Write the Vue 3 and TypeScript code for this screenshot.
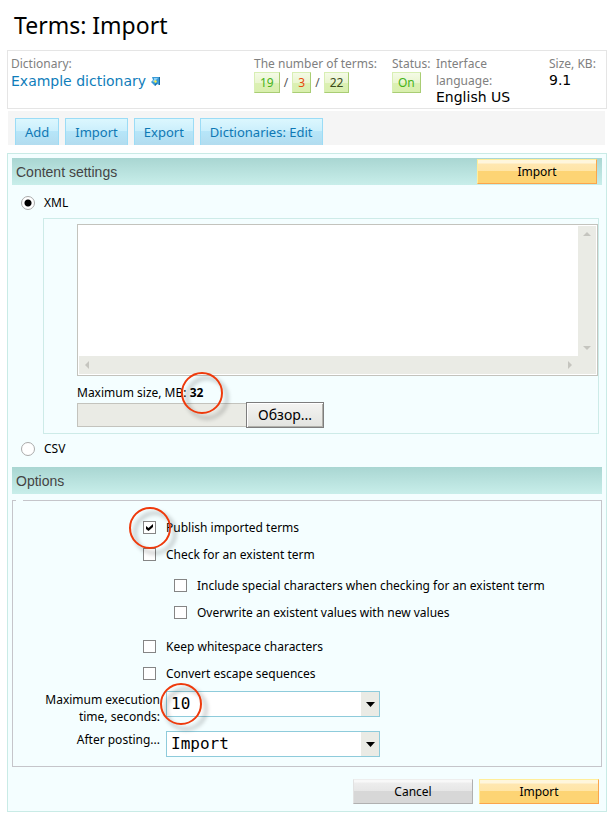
<script setup lang="ts">
import { ref } from 'vue'

interface Option {
  id: string
  label: string
  nested?: boolean
  marked?: boolean
  checked: boolean
}

const actions = ['Add', 'Import', 'Export', 'Dictionaries: Edit']
const source = ref('xml')
const body = ref('')
const seconds = ref('10')
const after = ref('Import')
const options = ref<Option[]>([
  { id: 'publish', label: 'Publish imported terms', marked: true, checked: true },
  { id: 'check', label: 'Check for an existent term', checked: false },
  { id: 'special', label: 'Include special characters when checking for an existent term', nested: true, checked: false },
  { id: 'overwrite', label: 'Overwrite an existent values with new values', nested: true, checked: false },
  { id: 'keep', label: 'Keep whitespace characters', checked: false },
  { id: 'escape', label: 'Convert escape sequences', checked: false },
])
</script>

<template>
  <div class="page">
    <h1>Terms: Import</h1>

    <section class="info">
      <div class="cell dictionary">
        <span class="caption">Dictionary:</span>
        <a href="#" class="value">Example dictionary
          <svg class="arrow" viewBox="0 0 9 9" width="9" height="9" aria-hidden="true">
            <path d="M1 0h8v8H8L6 7 4 9 0 5l2-2z" fill="#3a9ad6" />
            <path d="M3 1h4L3 5 1 4l2-1z" fill="#8fd4f7" />
            <path d="M4 3l2 1-1 2-2-1z" fill="#fff04a" />
            <path d="M8 0h1v8H8zM4 7l2-1v1L4 9z" fill="#1c6c9f" />
          </svg>
        </a>
      </div>
      <div class="cell terms">
        <span class="caption">The number of terms:</span>
        <span class="chips">
          <span class="chip green">19</span>/<span class="chip red">3</span>/<span class="chip">22</span>
        </span>
      </div>
      <div class="cell status">
        <span class="caption">Status:</span>
        <span class="chips"><span class="chip green">On</span></span>
      </div>
      <div class="cell language">
        <span class="caption">Interface language:</span>
        <span class="value">English US</span>
      </div>
      <div class="cell size">
        <span class="caption">Size, KB:</span>
        <span class="value">9.1</span>
      </div>
    </section>

    <nav class="toolbar">
      <button v-for="a in actions" :key="a" type="button">{{ a }}</button>
    </nav>

    <form class="panel" @submit.prevent>
      <div class="bar">
        <h2>Content settings</h2>
        <button type="submit" class="btn gold">Import</button>
      </div>

      <label class="radio"><input v-model="source" type="radio" name="source" value="xml" />XML</label>

      <div class="source">
        <div class="editor">
          <textarea v-model="body" aria-label="XML"></textarea>
          <div class="scroll vertical" aria-hidden="true">
            <svg viewBox="0 0 8 4" width="8" height="4"><path d="M0 4l4-4 4 4z" /></svg>
            <svg viewBox="0 0 8 4" width="8" height="4"><path d="M0 0l4 4 4-4z" /></svg>
          </div>
          <div class="scroll horizontal" aria-hidden="true">
            <svg viewBox="0 0 4 8" width="4" height="8"><path d="M4 0L0 4l4 4z" /></svg>
            <svg viewBox="0 0 4 8" width="4" height="8"><path d="M0 0l4 4-4 4z" /></svg>
          </div>
          <div class="corner"></div>
        </div>
        <label class="limit" for="file">Maximum size, MB: <b class="mark">32<i class="ring"></i></b></label>
        <div class="file">
          <input id="file" type="text" readonly />
          <button type="button">Обзор...</button>
        </div>
      </div>

      <label class="radio csv"><input v-model="source" type="radio" name="source" value="csv" />CSV</label>

      <div class="bar"><h2>Options</h2></div>

      <fieldset>
        <legend></legend>
        <div v-for="o in options" :key="o.id" class="check" :class="{ nested: o.nested }">
          <span class="mark">
            <input :id="o.id" v-model="o.checked" type="checkbox" />
            <svg v-if="o.checked" class="tick" viewBox="0 0 7 7" width="7" height="7" aria-hidden="true">
              <path d="M0 2l2.500 2L7 0v3L2.500 7 0 5z" />
            </svg>
            <i v-if="o.marked" class="ring"></i>
          </span>
          <label :for="o.id">{{ o.label }}</label>
        </div>
        <div class="row">
          <label for="seconds">Maximum execution time, seconds:</label>
          <div class="select mark">
            <select id="seconds" v-model="seconds"><option>10</option></select>
            <span class="drop"><svg viewBox="0 0 9 5" width="9" height="5"><path d="M0 0h9L4.500 5z" /></svg></span>
            <i class="ring"></i>
          </div>
        </div>
        <div class="row">
          <label for="after">After posting...</label>
          <div class="select">
            <select id="after" v-model="after"><option>Import</option></select>
            <span class="drop"><svg viewBox="0 0 9 5" width="9" height="5"><path d="M0 0h9L4.500 5z" /></svg></span>
          </div>
        </div>
      </fieldset>

      <div class="footer">
        <button type="button" class="btn silver">Cancel</button>
        <button type="submit" class="btn gold">Import</button>
      </div>
    </form>
  </div>
</template>

<style>
body {
  margin: 0;
  background: #fff;
}
</style>

<style scoped>
* {
  box-sizing: border-box;
}

.page {
  padding: 8px 8px 10px 7px;
  font: 12px/17px "Noto Sans", "Open Sans", sans-serif;
  color: #000;
}

button,
input,
select,
textarea {
  margin: 0;
  font: inherit;
  border-radius: 0;
}

h1 {
  margin: 0 0 8px;
  padding-left: 7px;
  font-size: 23px;
  line-height: 34px;
  font-weight: 400;
}

/* summary strip */
.info {
  display: flex;
  min-height: 59px;
  padding: 4px 3px 0;
  border: 1px solid #e5e5e5;
}

.cell {
  display: flex;
  flex-direction: column;
  flex: none;
}

.dictionary {
  flex: 1;
}

.terms {
  width: 138px;
}

.status {
  width: 44px;
}

.language {
  width: 113px;
}

.language .caption {
  width: 70px;
}

.size {
  width: 54px;
}

.caption {
  color: #808080;
  white-space: nowrap;
}

.language .caption {
  white-space: normal;
}

.value {
  font-family: "DejaVu Sans", sans-serif;
  font-size: 14px;
}

a.value {
  padding-top: 1px;
  color: #0f7dba;
  text-decoration: none;
}

.chips {
  display: flex;
  gap: 4px;
  align-items: center;
  color: #555;
}

.chip {
  min-width: 19px;
  height: 21px;
  padding: 0 5px;
  line-height: 19px;
  color: #3b4a1c;
  border: 1px solid #d8efb4;
  border-right-color: #a9cd74;
  border-bottom-color: #a9cd74;
  background: linear-gradient(#f4fae6, #eaf6d0 50%, #dcf0b4 50%, #d9efae);
}

.green {
  color: #45b31a;
}

.red {
  color: #e8480c;
}

/* actions */
.toolbar {
  display: flex;
  gap: 6px;
  margin: 2px 2px 8px 1px;
  padding: 7px 7px 0;
  background: #f5f5f5;
}

.toolbar button {
  height: 27px;
  padding: 0 9px;
  font-size: 13px;
  line-height: 20px;
  color: #0f78b4;
  border: 1px solid #9bdcf6;
  border-bottom: 0;
  background: linear-gradient(#dcf7fe, #cbeffc 46%, #b7e6f9 46%, #b2dcef);
}

/* form */
.panel {
  padding: 4px;
  border: 1px solid #c9ebe6;
  background: #f4feff;
}

.bar {
  display: flex;
  align-items: center;
  justify-content: space-between;
  height: 27px;
  padding: 0 5px 0 4px;
  background: linear-gradient(#a9d6d2, #c8eeea);
}

h2 {
  margin: 0;
  font: 14px/20px "Liberation Sans", Arial, sans-serif;
  color: #444;
}

.btn {
  width: 120px;
  height: 25px;
  padding: 0;
  line-height: 20px;
  color: #000;
  border: 1px solid;
}

.gold {
  border-color: #ffee9a #fba54c #fba54c #ffee9a;
  background: linear-gradient(#fff6dc 0 3px, #ffe7b0 4px, #ffe5a6 11px, #fdd474 11px);
}

.silver {
  border-color: #eee #b0b0b0 #b0b0b0 #e2e2e2;
  background: linear-gradient(#f8f8f8 0 2px, #ededed 3px, #e6e6e6 11px, #d7d7d7 11px);
}

.radio {
  display: flex;
  align-items: center;
  gap: 9px;
  width: fit-content;
  margin: 9px 9px 7px;
}

.radio input {
  appearance: none;
  width: 14px;
  height: 14px;
  border: 1px solid #aaa;
  border-radius: 50%;
  background: #fff;
}

.radio input:checked {
  background: radial-gradient(circle, #000 0 3px, #fff 4px);
}

.source {
  margin: 0 3px 0 31px;
  padding: 5px 0 5px 33px;
  border: 1px solid #cdebe8;
}

.editor {
  display: grid;
  grid-template-columns: 1fr 18px;
  grid-template-rows: 130px 18px;
  padding: 1px;
  border: 1px solid #c3c3bd;
  background: #fff;
}

textarea {
  width: 100%;
  height: 100%;
  border: 0;
  resize: none;
  outline: 0;
  overflow: hidden;
}

.scroll,
.corner {
  background: #eaebe5;
}

.scroll {
  display: flex;
  justify-content: space-between;
  align-items: center;
  padding: 6px;
  fill: #c5c5bf;
}

.vertical {
  flex-direction: column;
}

.limit {
  display: block;
  padding: 8px 0 1px;
}

.file {
  display: flex;
  align-items: center;
}

.file input {
  width: 169px;
  height: 24px;
  border: 1px solid #c3c3bd;
  border-right: 0;
  background: #eaebe5;
}

.file button {
  width: 78px;
  height: 26px;
  padding: 0;
  font-size: 14px;
  line-height: 20px;
  border: 1px solid #7d7d7d;
  background: linear-gradient(#f4f4f2, #e2e3df);
  box-shadow: inset 1px 1px #fff, inset -1px -1px #b0b0aa;
}

.csv {
  margin: 6px 9px 10px;
}

fieldset {
  min-width: 0;
  margin: 6px 0 0;
  padding: 13px 0 9px 130px;
  border: 1px solid #c5c5ca;
}

legend {
  width: 7px;
  height: 1px;
  margin-left: -127px;
  padding: 0;
}

.check {
  display: flex;
  align-items: center;
  gap: 10px;
  height: 27px;
}

.nested {
  padding-left: 31px;
}

.check:not(.nested) + .nested {
  margin-top: 4px;
}

.nested + .check:not(.nested) {
  margin-top: 7px;
}

.mark {
  position: relative;
}

.check .mark {
  display: flex;
}

.check input {
  appearance: none;
  width: 13px;
  height: 13px;
  border: 1px solid #858585;
  background: #fff;
}

.tick {
  position: absolute;
  left: 3px;
  top: 3px;
  pointer-events: none;
}

/* round highlight with a soft shadow */
.ring {
  position: absolute;
  left: 50%;
  top: 50%;
  z-index: 1;
  width: 42px;
  height: 42px;
  border: 2px solid #ee3a0c;
  border-radius: 50%;
  pointer-events: none;
  filter: drop-shadow(5px 5px 2px rgba(0, 0, 0, 0.35));
  transform: translate(-50%, -50%);
}

.limit .ring {
  left: 12px;
}

.select .ring {
  left: 14px;
}

.row {
  display: flex;
  align-items: flex-start;
  gap: 6px;
  margin: 4px 0 0 -103px;
}

.row + .row {
  margin-top: 6px;
}

.row label {
  width: 120px;
  text-align: right;
}

.select {
  display: flex;
  width: 214px;
  height: 26px;
  border: 1px solid #8ecbdb;
  background: #fff;
}

.select select {
  flex: 1;
  appearance: none;
  padding: 0 4px;
  font: 16px/24px "DejaVu Sans Mono", monospace;
  color: #000;
  border: 0;
  background: #fff;
}

.drop {
  display: flex;
  align-items: center;
  justify-content: center;
  width: 18px;
  background: #eaebe5;
}

.footer {
  display: flex;
  justify-content: flex-end;
  gap: 6px;
  padding: 12px 3px 3px;
}
</style>
